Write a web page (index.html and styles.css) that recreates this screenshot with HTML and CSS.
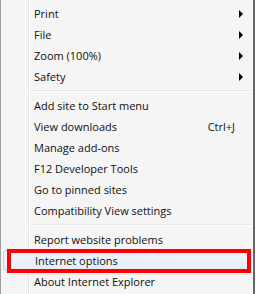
FILE: index.html
```html
<!DOCTYPE html>
<html lang="en">
<head>
    <meta charset="UTF-8">
    <title>Tools menu</title>
    <link rel="stylesheet" href="styles.css">
</head>
<body>
    <div class="menu">
        <div class="item">Print<span class="arrow"></span></div>
        <div class="item">File<span class="arrow"></span></div>
        <div class="item">Zoom (100%)<span class="arrow"></span></div>
        <div class="item">Safety<span class="arrow"></span></div>
        <div class="sep"></div>
        <div class="item">Add site to Start menu</div>
        <div class="item">View downloads<span class="key">Ctrl+J</span></div>
        <div class="item">Manage add-ons</div>
        <div class="item">F12 Developer Tools</div>
        <div class="item">Go to pinned sites</div>
        <div class="item">Compatibility View settings</div>
        <div class="sep"></div>
        <div class="item">Report website problems</div>
        <div class="item hover">Internet options<span class="mark"></span></div>
        <div class="item">About Internet Explorer</div>
    </div>
</body>
</html>
```

FILE: styles.css
```css
body {
    margin: 0;
    background: #fff;
    font-family: "Open Sans", "Segoe UI", sans-serif;
    font-size: 11px;
    color: #101010;
}
.menu {
    width: 252px;
    height: 291px;
    padding-top: 3px;
    border-left: 1px solid #a0a0a0;
    border-right: 2px solid #666;
    background:
        linear-gradient(to right, transparent 27px, #e2e3e3 27px, #e2e3e3 28px, #fff 28px, #fff 29px, transparent 29px),
        #f5f5f5;
}
.item {
    position: relative;
    display: flex;
    align-items: center;
    height: 21px;
    padding: 0 10px 0 33px;
}
.arrow {
    margin-left: auto;
    width: 0;
    height: 0;
    border-top: 4px solid transparent;
    border-bottom: 4px solid transparent;
    border-left: 4px solid #000;
}
.key {
    margin-left: auto;
    margin-right: 8px;
}
.sep {
    height: 8px;
    margin: 0 2px 0 29px;
    background: linear-gradient(#f5f5f5 3px, #e2e3e3 3px, #e2e3e3 4px, #fff 4px, #fff 5px, #f5f5f5 5px);
}
.hover {
    margin: 0 3px 0 2px;
    padding-left: 31px;
    background: linear-gradient(#f0f6fd, #e3eefb);
    border: 1px solid #b8d6fb;
    border-radius: 3px;
    height: 19px;
}
.mark {
    position: absolute;
    top: -2px;
    left: 3px;
    right: -2px;
    bottom: -3px;
    border: 4px solid #f00;
}
```
